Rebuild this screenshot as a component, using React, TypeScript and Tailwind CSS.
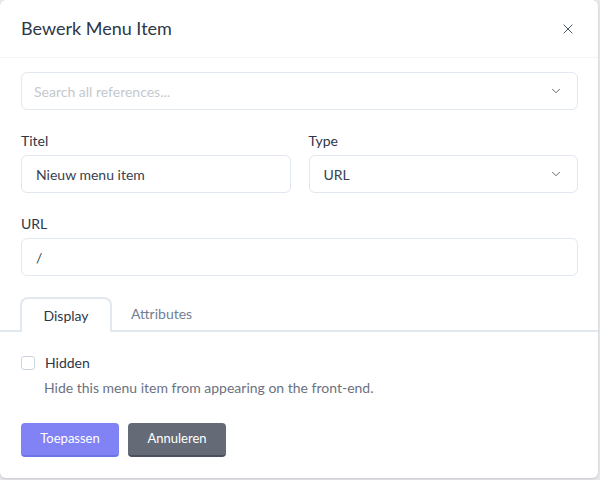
import { ChevronDown, X } from "lucide-react";

function Field({ label, children }: { label: string; children: React.ReactNode }) {
  return (
    <div className="flex flex-col">
      <label className="mb-[5px] text-[14px] leading-[18px] text-[#2d3748]">{label}</label>
      {children}
    </div>
  );
}

function App() {
  return (
    <div className="h-[480px] w-[600px] bg-[#e5e7eb] font-['Lato',sans-serif]">
      <div className="flex h-[478px] w-[598px] flex-col rounded-md bg-white shadow-sm">
        <div className="flex h-[58px] items-center justify-between border-b border-[#f3f4f6] pl-[21px] pr-[22px]">
          <h2 className="text-[18px] text-[#2d3748]">Bewerk Menu Item</h2>
          <X className="h-4 w-4 text-[#4b5563]" strokeWidth={1.5} />
        </div>

        <div className="flex flex-col pl-[21px] pr-[20px] pt-[14px]">
          <div className="flex h-[38px] items-center justify-between rounded-md border border-[#e2e8f0] pl-3 pr-3.5">
            <span className="text-[14px] text-[#c4c8ce]">Search all references...</span>
            <ChevronDown className="h-3.5 w-3.5 text-[#4b5563]" strokeWidth={1.5} />
          </div>

          <div className="mt-[22px] grid grid-cols-2 gap-[18px]">
            <Field label="Titel">
              <div className="flex h-[38px] items-center rounded-md border border-[#e2e8f0] px-3.5 text-[14px] text-[#374151]">
                Nieuw menu item
              </div>
            </Field>
            <Field label="Type">
              <div className="flex h-[38px] items-center justify-between rounded-md border border-[#e2e8f0] pl-3.5 pr-3.5 text-[14px] text-[#374151]">
                <span>URL</span>
                <ChevronDown className="h-3.5 w-3.5 text-[#4b5563]" strokeWidth={1.5} />
              </div>
            </Field>
          </div>

          <div className="mt-[22px]">
            <Field label="URL">
              <div className="flex h-[38px] items-center rounded-md border border-[#e2e8f0] px-3.5 text-[14px] text-[#374151]">
                /
              </div>
            </Field>
          </div>
        </div>

        <div className="mt-[21px] flex border-b-2 border-[#e2e8f0] px-5">
          <div className="-mb-[2px] flex h-[35px] w-[92px] items-center justify-center rounded-t-lg border-2 border-b-0 border-[#e2e8f0] bg-white text-[14px] text-[#2d3748]">
            Display
          </div>
          <div className="flex h-[33px] items-center px-[19px] text-[14px] text-[#718096]">Attributes</div>
        </div>

        <div className="flex flex-col pl-[21px] pt-[20px]">
          <label className="flex items-center gap-[10px]">
            <span className="h-[14px] w-[14px] rounded-[3px] border border-[#cbd5e1] bg-white" />
            <span className="text-[14px] text-[#2d3748]">Hidden</span>
          </label>
          <p className="ml-[23px] mt-[4px] text-[14px] text-[#6b7280]">Hide this menu item from appearing on the front-end.</p>

          <div className="mt-[25px] flex gap-[9px]">
            <button className="h-[34px] w-[98px] rounded border-b-2 border-[#6d74e8] bg-[#8183f4] text-[13px] text-white">
              Toepassen
            </button>
            <button className="h-[34px] w-[98px] rounded border-b-2 border-[#4b5060] bg-[#646a76] text-[13px] text-white">
              Annuleren
            </button>
          </div>
        </div>
      </div>
    </div>
  );
}

export default App;
